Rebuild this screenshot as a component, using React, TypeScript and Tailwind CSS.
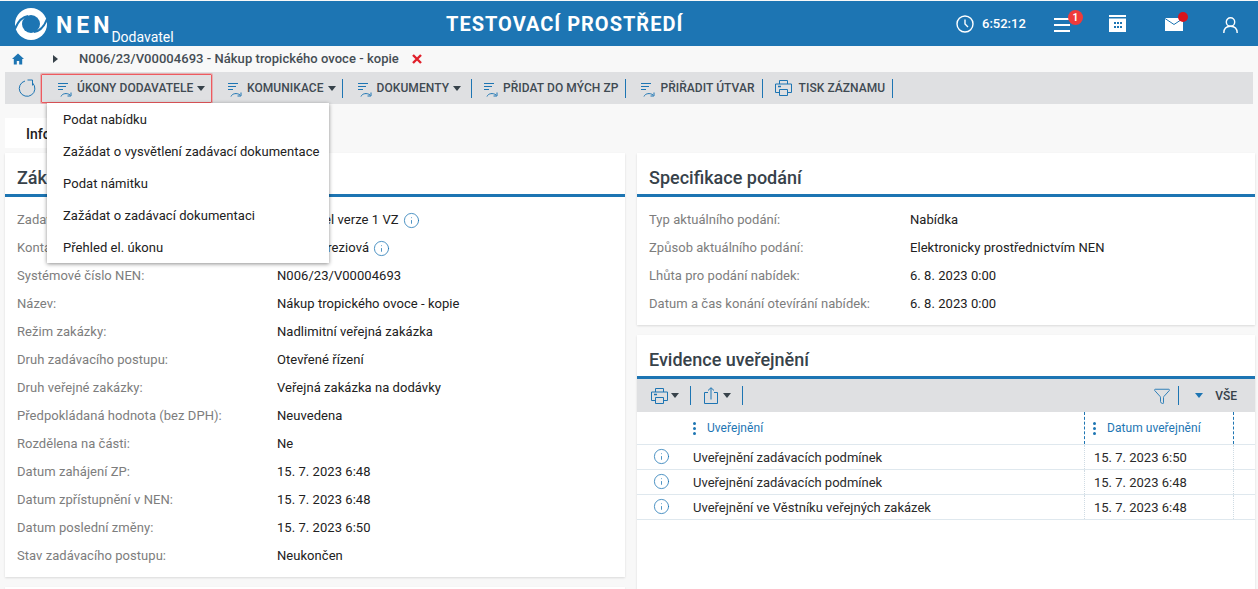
import { Filter, Info } from "lucide-react";

const leftRows: [string, string, boolean?][] = [
  ["Zadavatel:", "Zadavatel verze 1 VZ", true],
  ["Kontaktní osoba:", "Marie Tereziová", true],
  ["Systémové číslo NEN:", "N006/23/V00004693"],
  ["Název:", "Nákup tropického ovoce - kopie"],
  ["Režim zakázky:", "Nadlimitní veřejná zakázka"],
  ["Druh zadávacího postupu:", "Otevřené řízení"],
  ["Druh veřejné zakázky:", "Veřejná zakázka na dodávky"],
  ["Předpokládaná hodnota (bez DPH):", "Neuvedena"],
  ["Rozdělena na části:", "Ne"],
  ["Datum zahájení ZP:", "15. 7. 2023 6:48"],
  ["Datum zpřístupnění v NEN:", "15. 7. 2023 6:48"],
  ["Datum poslední změny:", "15. 7. 2023 6:50"],
  ["Stav zadávacího postupu:", "Neukončen"],
];

const specRows = [
  ["Typ aktuálního podání:", "Nabídka"],
  ["Způsob aktuálního podání:", "Elektronicky prostřednictvím NEN"],
  ["Lhůta pro podání nabídek:", "6. 8. 2023 0:00"],
  ["Datum a čas konání otevírání nabídek:", "6. 8. 2023 0:00"],
];

const publications = [
  ["Uveřejnění zadávacích podmínek", "15. 7. 2023 6:50"],
  ["Uveřejnění zadávacích podmínek", "15. 7. 2023 6:48"],
  ["Uveřejnění ve Věstníku veřejných zakázek", "15. 7. 2023 6:48"],
];

const menuItems = [
  "Podat nabídku",
  "Zažádat o vysvětlení zadávací dokumentace",
  "Podat námitku",
  "Zažádat o zadávací dokumentaci",
  "Přehled el. úkonu",
];

function ActionIcon() {
  return (
    <svg width="17" height="17" viewBox="0 0 17 17" fill="none" stroke="#1d75b3" strokeWidth="1" className="shrink-0">
      <path d="M1 3.5h10M1 6.5h8M1 9.5h5" />
      <path d="M4 16.5c1-3 6-4 9-1.5" />
      <path d="M14 12.5v3.5h-3.5" />
    </svg>
  );
}

function PrinterIcon() {
  return (
    <svg width="17" height="16" viewBox="0 0 17 16" fill="none" stroke="#1d75b3" strokeWidth="1" className="shrink-0">
      <path d="M4.5 4V.5h8V4" />
      <path d="M4.5 12.5h-4V4h16v8.5h-4" />
      <path d="M4.5 9.5h8v6h-8z" />
      <path d="M3 6.5h3" strokeWidth="1.5" />
    </svg>
  );
}

function ShareIcon() {
  return (
    <svg width="14" height="17" viewBox="0 0 14 17" fill="none" stroke="#1d75b3" strokeWidth="1" className="shrink-0">
      <path d="M4 5.5H.5v11h13v-11H10" />
      <path d="M7 12.5V1M4 3.5L7 .7l3 2.8" />
    </svg>
  );
}

function Caret({ className = "border-t-[#37424a]" }: { className?: string }) {
  return <span className={`inline-block h-0 w-0 border-x-4 border-t-[5px] border-x-transparent ${className}`} />;
}

function Separator() {
  return <span className="h-[19px] w-px shrink-0 bg-[#1d75b3]" />;
}

function ToolItem({ label, caret, icon }: { label: string; caret?: boolean; icon?: React.ReactNode }) {
  return (
    <div className="flex items-center gap-[3px]">
      {icon ?? <ActionIcon />}
      <span className="text-xs font-medium tracking-[0.06px] text-[#3f4a52]">{label}</span>
      {caret && <Caret className="ml-[1px] border-t-[#37424a]" />}
    </div>
  );
}

function PanelTitle({ title }: { title: string }) {
  return (
    <div className="flex h-11 items-center border-b-[3px] border-[#1d75b3] px-3 pt-[9px] text-lg leading-none font-medium text-[#37424a]">
      {title}
    </div>
  );
}

function DotsHandle() {
  return (
    <span className="flex h-[13px] w-[3px] flex-col justify-between">
      <span className="h-[3px] rounded-full bg-[#1d75b3]" />
      <span className="h-[3px] rounded-full bg-[#1d75b3]" />
      <span className="h-[3px] rounded-full bg-[#1d75b3]" />
    </span>
  );
}

function Row({ label, value, info, labelWidth }: { label: string; value: string; info?: boolean; labelWidth: string }) {
  return (
    <div className="flex h-7 items-center pl-3 text-[13px] tracking-[0.05px]">
      <span className={`${labelWidth} shrink-0 text-[#7d7d7d]`}>{label}</span>
      <span className="text-[#212121]">{value}</span>
      {info && <Info size={17} strokeWidth={1.1} className="ml-[4px] text-[#1d75b3]" />}
    </div>
  );
}

export default function App() {
  return (
    <div className="relative h-[589px] overflow-hidden bg-[#f8f8f8] font-['Roboto',sans-serif]">
      <header className="mt-px flex h-[45px] items-center bg-[#1d75b3] text-white">
        <div className="flex w-[446px] shrink-0 items-center">
          <svg width="32" height="32" viewBox="0 0 32 32" className="ml-[15px] shrink-0" fill="none">
            <circle cx="16" cy="16" r="16" fill="#fff" />
            <circle cx="16" cy="16" r="9" fill="#1d75b3" />
            <path d="M0 21C3 13 7 9 13 8" stroke="#1d75b3" strokeWidth="2" />
            <path d="M32 11C29 19 25 23 19 24" stroke="#1d75b3" strokeWidth="2" />
          </svg>
          <span className="mt-[4px] ml-[9px] text-[23px] leading-none font-bold tracking-[4px]">NEN</span>
          <span className="mt-[26px] -ml-[2px] text-sm leading-none">Dodavatel</span>
        </div>
        <span className="w-[237px] shrink-0 text-xl font-bold tracking-[1px] whitespace-nowrap">TESTOVACÍ PROSTŘEDÍ</span>
        <div className="ml-[273px] flex items-center">
          <svg width="18" height="18" viewBox="0 0 18 18" fill="none" stroke="#fff" strokeWidth="1.4">
            <circle cx="9" cy="9" r="8" />
            <path d="M9 4.5V9l3 3" />
          </svg>
          <span className="ml-2 text-[13px] font-medium">6:52:12</span>
        </div>
        <div className="relative mt-[2px] ml-[28px] flex h-[14px] w-4 flex-col justify-between">
          <span className="h-0.5 bg-white" />
          <span className="h-0.5 bg-white" />
          <span className="h-0.5 bg-white" />
          <span className="absolute -top-[8px] left-[14px] flex h-[15px] w-[15px] items-center justify-center rounded-full bg-[#ef3b3b] text-[10px] font-bold">1</span>
        </div>
        <svg width="17" height="17" viewBox="0 0 17 17" className="ml-[39px] shrink-0" fill="#fff">
          <path d="M0 0h17v2H0zM0 3.5h17V17H0z" />
          <path d="M5 7h2v2H5zM8 7h2v2H8zM11 7h2v2h-2zM5 11h2v2H5zM8 11h2v2H8zM11 11h2v2h-2z" fill="#1d75b3" />
        </svg>
        <div className="relative mt-[2px] ml-[39px] h-[13px] w-[18px]">
          <svg width="18" height="13" viewBox="0 0 18 13">
            <path d="M0 0h18v13H0z" fill="#fff" />
            <path d="M0 .5l9 6 9-6" fill="none" stroke="#1d75b3" />
          </svg>
          <span className="absolute -top-[6px] left-[13px] h-2.5 w-2.5 rounded-full bg-[#d8141c]" />
        </div>
        <svg width="15" height="16" viewBox="0 0 15 16" fill="none" stroke="#fff" strokeWidth="1.4" className="mt-[2px] ml-[40px] shrink-0">
          <circle cx="7.5" cy="5" r="4.2" />
          <path d="M.8 16c0-4.5 2.5-6.8 6.7-6.8s6.7 2.3 6.7 6.8" />
        </svg>
      </header>

      <div className="flex h-[26px] items-center text-[13px] font-medium tracking-[0.04px] text-[#454d54]">
        <svg width="12" height="12" viewBox="0 0 12 12" className="ml-3 shrink-0" fill="#1d75b3">
          <path d="M6 0.5L0 6h1.8v5.5h3V8h2.4v3.5h3V6H12z" />
        </svg>
        <span className="ml-[29px] h-0 w-0 border-y-4 border-l-[5px] border-y-transparent border-l-[#37424a]" />
        <span className="ml-[21px]">N006/23/V00004693 - Nákup tropického ovoce - kopie</span>
        <svg width="10" height="10" viewBox="0 0 10 10" stroke="#e0202a" strokeWidth="2.4" className="ml-[13px] shrink-0">
          <path d="M1 1l8 8M9 1l-8 8" />
        </svg>
      </div>

      <div className="mx-[5px] flex h-8 items-center bg-[#dfe0e2]">
        <svg width="18" height="18" viewBox="0 0 18 18" fill="none" stroke="#1d75b3" strokeWidth="1" className="ml-[13px] shrink-0">
          <path d="M14.6 4A7.8 7.8 0 1 1 7 2" />
          <path d="M9.5 1h5v5.5" />
        </svg>
        <div className="ml-[5px] flex h-[29px] w-[171px] items-center rounded-[1px] border border-[#ee5a5f] pl-[15px] shadow-[0_0_0_1px_rgba(238,90,95,0.35)]">
          <ToolItem label="ÚKONY DODAVATELE" caret />
        </div>
        <div className="ml-[15px]"><ToolItem label="KOMUNIKACE" caret /></div>
        <span className="ml-[6px]" />
        <Separator />
        <div className="ml-[14px]"><ToolItem label="DOKUMENTY" caret /></div>
        <span className="ml-[10px]" />
        <Separator />
        <div className="ml-[11px]"><ToolItem label="PŘIDAT DO MÝCH ZP" /></div>
        <span className="ml-[7px]" />
        <Separator />
        <div className="ml-[14px]"><ToolItem label="PŘIŘADIT ÚTVAR" /></div>
        <span className="ml-[7px]" />
        <Separator />
        <div className="ml-3">
          <ToolItem label="TISK ZÁZNAMU" icon={<span className="mr-1"><PrinterIcon /></span>} />
        </div>
        <span className="ml-[7px]" />
        <Separator />
      </div>

      <div className="mx-[5px] mt-[14px] h-[30px] w-[120px] bg-white pt-[6px] pl-[21px] text-sm font-medium text-[#212121]">Informace</div>

      <main className="mt-[5px] flex gap-3 pr-[3px] pl-[5px]">
        <div className="flex w-[620px] shrink-0 flex-col gap-[10px]">
          <section className="h-[424px] bg-white shadow-[0_1px_2px_rgba(0,0,0,0.12)]">
            <PanelTitle title="Zákazka" />
            <div className="pt-[9px]">
              {leftRows.map(([label, value, info]) => (
                <Row key={label} label={label} value={value} info={info} labelWidth="w-[260px]" />
              ))}
            </div>
          </section>
          <section className="h-20 bg-white shadow-[0_1px_2px_rgba(0,0,0,0.12)]" />
        </div>

        <div className="flex w-[618px] shrink-0 flex-col gap-[10px]">
          <section className="h-[172px] bg-white shadow-[0_1px_2px_rgba(0,0,0,0.12)]">
            <PanelTitle title="Specifikace podání" />
            <div className="pt-[9px]">
              {specRows.map(([label, value]) => (
                <Row key={label} label={label} value={value} labelWidth="w-[261px]" />
              ))}
            </div>
          </section>

          <section className="h-[260px] bg-white shadow-[0_1px_2px_rgba(0,0,0,0.12)]">
            <PanelTitle title="Evidence uveřejnění" />
            <div className="flex h-[33px] items-center bg-[#dfe0e2] pr-[18px] pl-[14px]">
              <PrinterIcon />
              <Caret className="ml-[3px] border-t-[#37424a]" />
              <span className="ml-[11px]" />
              <Separator />
              <span className="ml-[13px]"><ShareIcon /></span>
              <Caret className="ml-[5px] border-t-[#37424a]" />
              <span className="ml-[11px]" />
              <Separator />
              <Filter size={18} strokeWidth={1.2} className="ml-auto text-[#1d75b3]" />
              <span className="ml-[7px]" />
              <Separator />
              <Caret className="ml-4 border-t-[#1d75b3]" />
              <span className="ml-3 text-xs font-medium text-[#37424a]">VŠE</span>
            </div>
            <div className="grid grid-cols-[447px_150px_21px] border-b border-[#dfe8ee] text-xs tracking-[0.05px] text-[#1d75b3]">
              <div className="flex h-8 items-center pl-[56px]">
                <DotsHandle />
                <span className="ml-[11px]">Uveřejnění</span>
              </div>
              <div className="flex h-8 items-center border-x border-dashed border-[#1d75b3] pl-2">
                <DotsHandle />
                <span className="ml-[11px]">Datum uveřejnění</span>
              </div>
              <div />
            </div>
            {publications.map(([name, date], i) => (
              <div key={i} className="grid h-[25px] grid-cols-[447px_150px_21px] border-b border-[#dfe8ee] text-[13px] text-[#2a2a2a]">
                <div className="flex items-center pl-4">
                  <Info size={17} strokeWidth={1.1} className="-mt-px text-[#1d75b3]" />
                  <span className="mt-px ml-[23px]">{name}</span>
                </div>
                <div className="flex items-center border-x border-dotted border-[#cfdbe3] pt-[2px] pl-[9px]">{date}</div>
                <div />
              </div>
            ))}
          </section>
        </div>
      </main>

      <div className="absolute top-[103px] left-[47px] w-[282px] bg-white shadow-[0_1px_4px_rgba(0,0,0,0.45)]">
        {menuItems.map((item) => (
          <div key={item} className="flex h-8 items-center pt-[2px] pl-4 text-[13px] tracking-[0.05px] text-[#212121]">{item}</div>
        ))}
      </div>
    </div>
  );
}
